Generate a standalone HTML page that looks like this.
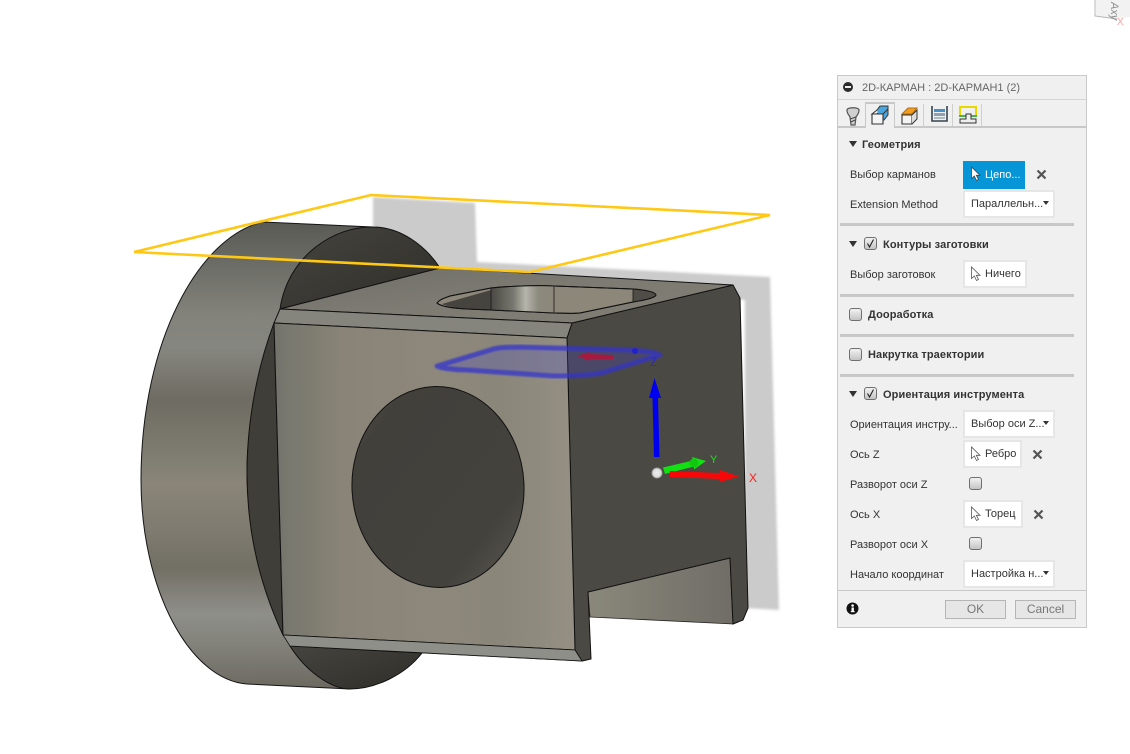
<!DOCTYPE html>
<html><head><meta charset="utf-8"><style>
html,body{margin:0;padding:0;background:#fff;width:1130px;height:754px;overflow:hidden}
body{position:relative;font-family:"Liberation Sans",sans-serif}
svg.scene{position:absolute;left:0;top:0}
#p{position:absolute;left:837px;top:75px;width:248px;height:551px;background:#f0f0f0;border:1px solid #c9c9c9;font-size:11px;color:#333}
#p .a{position:absolute;white-space:nowrap;line-height:14px;margin-top:1px}
#p .b{font-weight:bold;letter-spacing:.1px}
#p .l{left:12px}
.box{position:absolute;left:125px;background:#fff;border:2px solid #e6e6e6;box-sizing:border-box;height:28px;line-height:24px;padding-left:6px;white-space:nowrap;overflow:hidden}
.sep{position:absolute;left:2px;width:234px;height:3px;background:#c8c8c8}
.cb{position:absolute;width:13px;height:13px;box-sizing:border-box;border:1px solid #6f6f6f;border-radius:3px;background:linear-gradient(#f2f2f2,#c4c4c4)}
.tri{position:absolute;width:0;height:0;border-left:4.5px solid transparent;border-right:4.5px solid transparent;border-top:6px solid #333}
.dd{position:absolute;right:4px;top:9px;width:0;height:0;border-left:3px solid transparent;border-right:3px solid transparent;border-top:4px solid #333}
.btn{position:absolute;top:524px;height:19px;box-sizing:border-box;border:1px solid #b5b5b5;background:#e6e6e6;color:#777;font-size:12px;line-height:17px;text-align:center}
</style></head><body>
<svg class="scene" width="1130" height="754" viewBox="0 0 1130 754">
<defs>
<linearGradient id="cyl" x1="0" y1="0" x2="0" y2="1">
<stop offset="0" stop-color="#5a5a54"/><stop offset=".08" stop-color="#6a6a64"/><stop offset=".2" stop-color="#83837c"/><stop offset=".27" stop-color="#868680"/><stop offset=".38" stop-color="#6e6c62"/><stop offset=".5" stop-color="#7f7c71"/><stop offset=".56" stop-color="#8a8578"/><stop offset=".66" stop-color="#7f7b70"/><stop offset=".74" stop-color="#726f64"/><stop offset=".84" stop-color="#8f8f8a"/><stop offset=".93" stop-color="#7d7c74"/><stop offset="1" stop-color="#6b685f"/>
</linearGradient>
<linearGradient id="front" x1="0" y1="0" x2="1" y2="0">
<stop offset="0" stop-color="#72716a"/><stop offset=".05" stop-color="#797970"/><stop offset=".12" stop-color="#7e7c70"/><stop offset=".22" stop-color="#8a8478"/><stop offset=".55" stop-color="#8e887c"/><stop offset=".75" stop-color="#8a8679"/><stop offset="1" stop-color="#958f84"/>
</linearGradient>
<linearGradient id="top" x1="0" y1="0" x2="1" y2="1">
<stop offset="0" stop-color="#6f6f68"/><stop offset=".5" stop-color="#7d7b72"/><stop offset="1" stop-color="#807d74"/>
</linearGradient>
<linearGradient id="dk" x1="0" y1="0" x2="1" y2="1">
<stop offset="0" stop-color="#45443f"/><stop offset="1" stop-color="#2f2e29"/>
</linearGradient>
<linearGradient id="metal" x1="0" y1="0" x2="1" y2="0">
<stop offset="0" stop-color="#4a4944"/><stop offset=".35" stop-color="#77776f"/><stop offset=".55" stop-color="#b5b5ab"/><stop offset=".75" stop-color="#8d8a7e"/><stop offset="1" stop-color="#8c8779"/>
</linearGradient>
<linearGradient id="notch" x1="0" y1="0" x2="1" y2="0">
<stop offset="0" stop-color="#8b887b"/><stop offset="1" stop-color="#6f6d66"/>
</linearGradient>
<linearGradient id="hole" x1="0" y1="0" x2="1" y2="1">
<stop offset="0" stop-color="#55534d"/><stop offset=".18" stop-color="#42403b"/><stop offset=".75" stop-color="#44423d"/><stop offset="1" stop-color="#5c5a53"/>
</linearGradient>
<filter id="bl"><feGaussianBlur stdDeviation="1.2"/></filter>
<filter id="bs"><feGaussianBlur stdDeviation=".7"/></filter>
<radialGradient id="dot"><stop offset="0" stop-color="#eee"/><stop offset=".7" stop-color="#ddd"/><stop offset="1" stop-color="#888"/></radialGradient>
</defs>
<!-- shadows -->
<path d="M373,197 L475,203 L477,262 L770,277 L779,610 L745,608 L745,300 L373,260Z" fill="#cbcbcb" filter="url(#bl)"/>
<!-- top-right view cube -->
<path d="M1096,0 V16 L1118,19 L1130,17 V0Z" fill="#f2f2f2"/>
<path d="M1095,0 V16 L1117,19" fill="none" stroke="#b4b4b4"/>
<text x="0" y="0" transform="translate(1111,2) rotate(90)" font-family="Liberation Sans" font-size="11" fill="#8c8c8c" font-style="italic">Axy</text>
<text x="1117" y="25" font-family="Liberation Sans" font-size="10" fill="#ff9f9f">X</text>
<!-- cylinder rim -->
<path d="M373,227 L263,222 C200,236 141,340 141,480 C141,590 190,680 247,684 L350,689 C310,680 247,570 247,473 C247,345 325,227 373,227Z" fill="url(#cyl)" stroke="#151515" stroke-width="1"/>
<!-- dark parts of disc -->
<path d="M280,309 C288,255 335,226 373,227 C400,227 425,245 440,268Z" fill="url(#dk)" stroke="#111"/>
<path d="M274,323 C258,365 247,420 247,473 C247,535 262,590 283,635Z" fill="#3f3e39" stroke="#111"/>
<path d="M290,646 C305,670 330,689 350,689 C375,689 405,675 422,653Z" fill="url(#dk)" stroke="#111"/>
<!-- notch face -->
<path d="M588,592 L730,558 L733,624 L590,617Z" fill="url(#notch)" stroke="#222" stroke-width=".8"/>
<!-- right dark face -->
<path d="M572,323 L733,285 L740,298 L748,608 L743,620 L733,624 L730,558 L588,592 L591,659 L582,661 L575,650 L567,338Z" fill="#4b4943" stroke="#111"/>
<!-- top face -->
<path d="M280,309 L440,268 L733,285 L572,323Z" fill="url(#top)" stroke="#111"/>
<!-- upper chamfer -->
<path d="M280,309 L572,323 L567,338 L274,323Z" fill="#85857d" stroke="#111"/>
<!-- front -->
<path d="M274,323 L567,338 L575,650 L283,635Z" fill="url(#front)" stroke="#111"/>
<!-- bottom chamfer -->
<path d="M283,635 L575,650 L582,661 L290,646Z" fill="#8d8f88" stroke="#111" stroke-width=".8"/>
<path d="M422,653 L582,661" stroke="#222" stroke-width=".8"/>
<!-- front hole -->
<ellipse cx="438" cy="487" rx="86" ry="100.5" transform="rotate(-3 438 487)" fill="url(#hole)" stroke="#111"/>
<!-- pocket hole -->
<path d="M437,303 C440,299 445,298 450,296 L491,288 C510,286 540,285 554,286 L633,289 C645,290 655,292 656,295 C655,298 645,300 633,302 L580,313 C570,314 560,313 554,313 L491,310 L467,309 C450,308 440,306 437,303Z" fill="#8c8779" stroke="#111"/>
<path d="M442,304 L491,290 V310 L467,309 C455,308 446,306 442,304Z" fill="#45443f"/>
<path d="M491,288 C510,286 540,285 554,286 V313 L491,310Z" fill="url(#metal)"/>
<path d="M633,289 C645,290 655,292 656,295 C655,298 645,300 633,302Z" fill="#4f4d48"/>
<path d="M437,303 C440,299 445,298 450,296 L491,288 C510,286 540,285 554,286 L633,289 C645,290 655,292 656,295 C655,298 645,300 633,302 L580,313 C570,314 560,313 554,313 L491,310 L467,309 C450,308 440,306 437,303Z" fill="none" stroke="#111"/>
<path d="M491,288 V310 M554,286 V313 M633,289 V302" stroke="#1a1a1a" stroke-width=".8"/>
<!-- yellow plane -->
<path d="M134,252 L371,195 L770,215 L530,272 Z" fill="none" stroke="#ffc815" stroke-width="2.6" stroke-linejoin="miter"/>
<!-- blue pocket selection -->
<path d="M437,366 L490,350 C498,347 510,347 520,347 L633,350 C645,351 655,352 660,355 L605,372 C595,375 580,376 553,376 L467,370 C455,370 440,368 437,366Z" fill="#4040c8" fill-opacity=".26" stroke="#3232cc" stroke-opacity=".72" stroke-width="5" stroke-linejoin="round" filter="url(#bs)"/>
<path d="M577,356 L590,352 V354 L613,355 V359 L590,359 V361Z" fill="#b0153c" fill-opacity=".9"/>
<circle cx="635" cy="351" r="3" fill="#2222cc"/>
<text x="650" y="366" font-family="Liberation Sans" font-size="12" fill="#2a2ac8">Z</text>
<!-- triad -->
<path d="M654,457 L652.500,398 H649 L654.500,378 L661,398 H658 L659.500,457Z" fill="#0000f0"/>
<path d="M663,467.500 L693,460.500 L692,457 L706,461 L694,469.500 L694,466.500 L665,474Z" fill="#12e012"/>
<circle cx="694" cy="463" r="4.500" fill="#10c810"/>
<path d="M670,471 L720,473 V470 L739,476.500 L720,482 V479 L670,477Z" fill="#f60808"/>
<circle cx="657" cy="473" r="5.500" fill="url(#dot)"/>
<text x="710" y="463" font-family="Liberation Sans" font-size="11" fill="#22dd22">Y</text>
<text x="749" y="482" font-family="Liberation Sans" font-size="12" fill="#f42020">X</text>
</svg>

<div id="p">
<svg style="position:absolute;left:4px;top:5px" width="12" height="12"><circle cx="6" cy="6" r="5" fill="#2b2b2b"/><rect x="3" y="5" width="6" height="2" fill="#eee"/></svg>
<div class="a" style="left:24px;top:4px;color:#666">2D-КАРМАН : 2D-КАРМАН1 (2)</div>
<div style="position:absolute;left:0;top:23px;width:248px;height:1px;background:#d4d4d4"></div>
<!-- tabs -->
<div style="position:absolute;left:0;top:50px;width:248px;height:2px;background:#c8c8c8"></div>
<div style="position:absolute;left:27px;top:26px;width:30px;height:26px;box-sizing:border-box;background:#f0f0f0;border:1px solid #c8c8c8;border-bottom:none;border-top-width:2px"></div>
<div style="position:absolute;left:85px;top:28px;width:1px;height:22px;background:#cfcfcf"></div>
<div style="position:absolute;left:114px;top:28px;width:1px;height:22px;background:#cfcfcf"></div>
<div style="position:absolute;left:143px;top:28px;width:1px;height:22px;background:#cfcfcf"></div>
<svg style="position:absolute;left:0;top:24px" width="150" height="28" viewBox="838 99 150 28">
<path d="M847,109 C847,106 859,106 859,109 C859,113 857,114 856,116 L855,124 H851 L850,116 C849,114 847,113 847,109Z" fill="#d0d0d0" stroke="#555" stroke-width="1.2"/>
<path d="M850,118 L856,116 M851,121 L855,119" stroke="#444"/>
<path d="M872,113 L877,109 H881 L877,113Z" fill="#eee" stroke="#333"/>
<path d="M877,109 L880,105 H888 V114 L884,119 H880" fill="#4aa6dc" stroke="#333"/>
<path d="M872,113 H883 V123 H872Z" fill="#f4f4f4" stroke="#333" stroke-width="1.1"/>
<path d="M883,113 L888,108" stroke="#333"/>
<path d="M902,113 L908,107 H917 L912,113Z" fill="#f39c1e" stroke="#b86e10"/>
<path d="M902,114 H912 V123 H902Z" fill="#f4f4f4" stroke="#333" stroke-width="1.1"/>
<path d="M912,114 L917,109 V118 L912,123" fill="#ddd" stroke="#333"/>
<path d="M932,105 V120 H947 V105" fill="none" stroke="#39424e" stroke-width="1.6"/>
<rect x="934" y="108" width="11" height="3" fill="#4a90c8"/><rect x="934" y="112" width="11" height="3" fill="#8fa0b2"/><rect x="934" y="116" width="11" height="2" fill="#b0b8c0"/>
<path d="M960,114 V106 H976 V114" fill="none" stroke="#e8d800" stroke-width="2"/>
<path d="M959,115 H966 M970,115 H977" stroke="#4caf50" stroke-width="2"/>
<path d="M960,122 H976 V118 H971 V113 H966 V118 H960Z" fill="#eee" stroke="#333"/>
</svg>
<!-- Geometry -->
<div class="tri" style="left:11px;top:65px"></div>
<div class="a b" style="left:24px;top:61px">Геометрия</div>
<div class="a l" style="top:91px">Выбор карманов</div>
<div class="box" style="top:85px;width:62px;background:#0696d7;border:none;color:#fff;line-height:28px;padding-left:22px">Цепо...</div>
<svg style="position:absolute;left:132px;top:90px" width="12" height="16" viewBox="0 0 12 16"><path d="M1.500,1 V12.500 L4.300,10 L6.500,14.500 L8.500,13.500 L6.300,9.300 H10Z" fill="#fff" stroke="#444" stroke-width=".8"/></svg>
<svg style="position:absolute;left:198px;top:93px" width="11" height="11"><path d="M1.500,1.500 L9.500,9.500 M9.500,1.500 L1.500,9.500" stroke="#555" stroke-width="2.2"/></svg>
<div class="a l" style="top:121px">Extension Method</div>
<div class="box" style="top:114px;width:92px">Параллельн...<span class="dd"></span></div>
<div class="sep" style="top:147px"></div>
<!-- Contours -->
<div class="tri" style="left:11px;top:165px"></div>
<div class="cb" style="left:26px;top:161px"></div>
<svg style="position:absolute;left:26px;top:161px" width="13" height="13"><path d="M3.500,6.500 L5.500,10 L9.500,2.500" fill="none" stroke="#222" stroke-width="1.100"/></svg>
<div class="a b" style="left:45px;top:161px">Контуры заготовки</div>
<div class="a l" style="top:191px">Выбор заготовок</div>
<div class="box" style="top:184px;width:64px;padding-left:20px">Ничего</div>
<div class="sep" style="top:218px"></div>
<div class="cb" style="left:11px;top:232px"></div>
<div class="a b" style="left:30px;top:231px">Дооработка</div>
<div class="sep" style="top:258px"></div>
<div class="cb" style="left:11px;top:272px"></div>
<div class="a b" style="left:30px;top:271px">Накрутка траектории</div>
<div class="sep" style="top:298px"></div>
<!-- Orientation -->
<div class="tri" style="left:11px;top:315px"></div>
<div class="cb" style="left:26px;top:311px"></div>
<svg style="position:absolute;left:26px;top:311px" width="13" height="13"><path d="M3.500,6.500 L5.500,10 L9.500,2.500" fill="none" stroke="#222" stroke-width="1.100"/></svg>
<div class="a b" style="left:45px;top:311px">Ориентация инструмента</div>
<div class="a l" style="top:341px">Ориентация инстру...</div>
<div class="box" style="top:334px;width:92px">Выбор оси Z...<span class="dd"></span></div>
<div class="a l" style="top:371px">Ось Z</div>
<div class="box" style="top:364px;width:59px;padding-left:20px">Ребро</div>
<svg style="position:absolute;left:194px;top:373px" width="11" height="11"><path d="M1.500,1.500 L9.500,9.500 M9.500,1.500 L1.500,9.500" stroke="#555" stroke-width="2.2"/></svg>
<div class="a l" style="top:401px">Разворот оси Z</div>
<div class="cb" style="left:131px;top:401px"></div>
<div class="a l" style="top:431px">Ось X</div>
<div class="box" style="top:424px;width:60px;padding-left:20px">Торец</div>
<svg style="position:absolute;left:195px;top:433px" width="11" height="11"><path d="M1.500,1.500 L9.500,9.500 M9.500,1.500 L1.500,9.500" stroke="#555" stroke-width="2.2"/></svg>
<div class="a l" style="top:461px">Разворот оси X</div>
<div class="cb" style="left:131px;top:461px"></div>
<div class="a l" style="top:491px">Начало координат</div>
<div class="box" style="top:484px;width:92px">Настройка н...<span class="dd"></span></div>
<!-- cursors -->
<svg style="position:absolute;left:132px;top:190px" width="12" height="16" viewBox="0 0 12 16"><path d="M1.500,1 V12.500 L4.300,10 L6.500,14.500 L8.500,13.500 L6.300,9.300 H10Z" fill="#fff" stroke="#555" stroke-width=".8"/></svg>
<svg style="position:absolute;left:132px;top:370px" width="12" height="16" viewBox="0 0 12 16"><path d="M1.500,1 V12.500 L4.300,10 L6.500,14.500 L8.500,13.500 L6.300,9.300 H10Z" fill="#fff" stroke="#555" stroke-width=".8"/></svg>
<svg style="position:absolute;left:132px;top:430px" width="12" height="16" viewBox="0 0 12 16"><path d="M1.500,1 V12.500 L4.300,10 L6.500,14.500 L8.500,13.500 L6.300,9.300 H10Z" fill="#fff" stroke="#555" stroke-width=".8"/></svg>
<!-- footer -->
<div style="position:absolute;left:0;top:514px;width:248px;height:1px;background:#c8c8c8"></div>
<svg style="position:absolute;left:8px;top:526px" width="14" height="14"><circle cx="6.500" cy="6.500" r="6" fill="#111"/><rect x="5.500" y="5.500" width="2.400" height="4.500" fill="#fff"/><rect x="4.800" y="9" width="3.800" height="1.200" fill="#fff"/><circle cx="6.600" cy="3.500" r="1.300" fill="#fff"/></svg>
<div class="btn" style="left:107px;width:61px">OK</div>
<div class="btn" style="left:177px;width:61px">Cancel</div>
</div>
</body></html>
